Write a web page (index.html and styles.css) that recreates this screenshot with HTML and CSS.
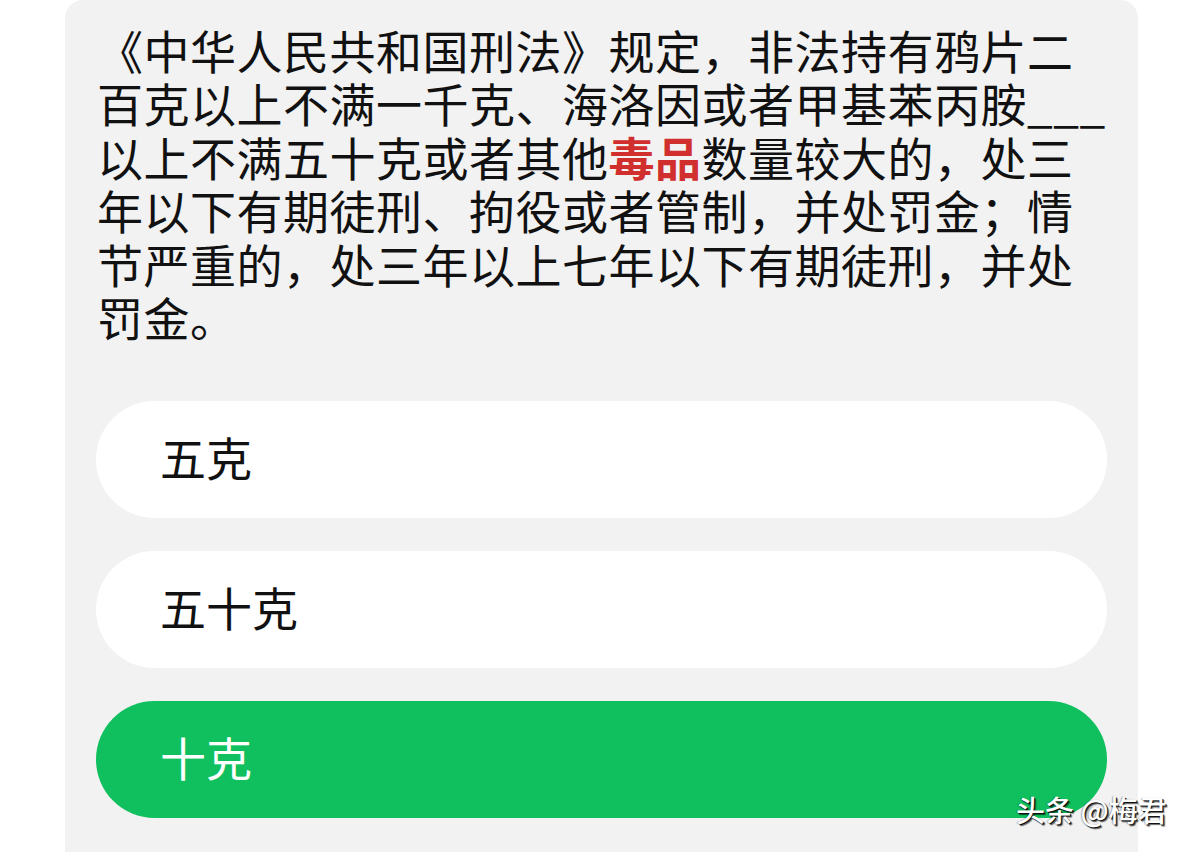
FILE: index.html
```html
<!DOCTYPE html>
<html lang="zh-CN">
<head>
<meta charset="utf-8">
<title>题目</title>
<link rel="stylesheet" href="styles.css">
</head>
<body>
<div class="card">
  <p class="question">《中华人民共和国刑法》规定，非法持有鸦片二百克以上不满一千克、海洛因或者甲基苯丙胺___以上不满五十克或者其他<span class="hl">毒品</span>数量较大的，处三年以下有期徒刑、拘役或者管制，并处罚金；情节严重的，处三年以上七年以下有期徒刑，并处罚金。</p>
  <div class="options">
    <div class="option">五克</div>
    <div class="option">五十克</div>
    <div class="option selected">十克</div>
  </div>
</div>
<div class="watermark">头条 @梅君</div>
</body>
</html>
```
FILE: styles.css
```css
html, body {
  margin: 0;
  padding: 0;
  background: #ffffff;
  height: 852px;
  overflow: hidden;
}
body {
  font-family: "Noto Sans CJK SC", "Noto Sans", sans-serif;
  position: relative;
}
.card {
  margin: 0 62px 0 65px;
  background: #f2f2f2;
  border-radius: 18px 18px 0 0;
  padding: 23px 31px 34px 31px;
  height: 852px;
  box-sizing: border-box;
}
.question {
  margin: 0 0 0 1px;
  width: 1012px;
  font-size: 46px;
  line-height: 53.4px;
  letter-spacing: 0.5px;
  color: #111111;
}
.hl {
  color: #d12f2e;
  font-weight: 700;
}
.options {
  margin-top: 58px;
  display: flex;
  flex-direction: column;
  gap: 33px;
}
.option {
  height: 117px;
  border-radius: 60px;
  background: #ffffff;
  display: flex;
  align-items: center;
  padding: 0 0 7px 64px;
  box-sizing: border-box;
  font-size: 46px;
  color: #111111;
}
.option.selected {
  background: #10c05e;
  color: #ffffff;
}
.watermark {
  position: absolute;
  left: 1016px;
  top: 788px;
  font-size: 29px;
  font-weight: 500;
  color: #ffffff;
  text-shadow: 1px 1px 0 #111, 2px 2px 1px rgba(0,0,0,0.6), -1px 0 1px rgba(0,0,0,0.3);
  white-space: nowrap;
}
```
